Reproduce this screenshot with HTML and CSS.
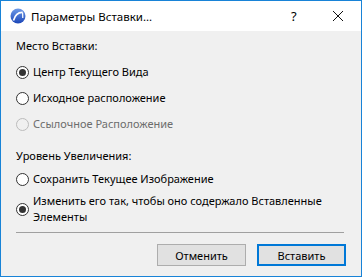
FILE: index.html
```html
<!DOCTYPE html>
<html lang="ru">
<head>
  <meta charset="UTF-8" />
  <title>Параметры Вставки...</title>
  <link rel="stylesheet" href="styles.css">
</head>
<body>
  <div class="window">
    <div class="titlebar">
      <svg class="app-icon" width="16" height="16" viewBox="0 0 16 16">
        <defs>
          <linearGradient id="g" x1="0" y1="0" x2="0" y2="1">
            <stop offset="0" stop-color="#6f9be8"/>
            <stop offset="1" stop-color="#1b46b8"/>
          </linearGradient>
        </defs>
        <circle cx="8" cy="8" r="7.5" fill="url(#g)"/>
        <path d="M3.5 12.5 C5 7 8 4.2 12.6 4.4" stroke="#fff" stroke-width="1.6" fill="none"/>
        <path d="M12.6 4.4 L12.8 10" stroke="#fff" stroke-width="1.2" fill="none"/>
      </svg>
      <span class="title">Параметры Вставки...</span>
      <span class="help">?</span>
      <svg class="close" width="12" height="12" viewBox="0 0 12 12">
        <path d="M1 1 L11 11 M11 1 L1 11" stroke="#111" stroke-width="1"/>
      </svg>
    </div>

    <div class="content">
      <div class="group-label">Место Вставки:</div>
      <label class="radio checked"><span class="dot"></span>Центр Текущего Вида</label>
      <label class="radio"><span class="dot"></span>Исходное расположение</label>
      <label class="radio disabled"><span class="dot"></span>Ссылочное Расположение</label>

      <div class="group-label second">Уровень Увеличения:</div>
      <label class="radio keep"><span class="dot"></span>Сохранить Текущее Изображение</label>
      <label class="radio checked multi"><span class="dot"></span><span>Изменить его так, чтобы оно содержало Вставленные Элементы</span></label>

      <div class="separator"></div>

      <div class="buttons">
        <button class="btn">Отменить</button>
        <button class="btn default">Вставить</button>
      </div>
    </div>
  </div>
</body>
</html>
```

FILE: styles.css
```css
html, body {
  margin: 0;
  padding: 0;
}
body {
  font-family: 'Noto Sans', 'Open Sans', sans-serif;
  font-size: 11px;
  color: #000;
  background: #fff;
}
.window {
  width: 362px;
  height: 277px;
  box-sizing: border-box;
  border: 1px solid #1883d7;
  background: #f0f0f0;
  display: flex;
  flex-direction: column;
}
.titlebar {
  height: 30px;
  background: #fff;
  display: flex;
  align-items: center;
  padding-left: 9px;
}
.app-icon {
  margin-right: 5px;
}
.title {
  flex: 1;
  font-size: 11.5px;
}
.help {
  width: 10px;
  font-size: 13px;
  margin-right: 31px;
}
.close {
  margin-right: 17px;
}
.content {
  padding: 7px 15px 0 15px;
}
.group-label {
  line-height: 16px;
  margin-bottom: 10px;
}
.group-label.second {
  margin-top: 16px;
  margin-bottom: 7px;
}
.radio {
  display: flex;
  align-items: center;
  line-height: 16px;
  margin-bottom: 10px;
}
.radio.keep {
  margin-bottom: 6px;
}
.radio .dot {
  width: 11px;
  height: 11px;
  border: 1px solid #333;
  border-radius: 50%;
  background: #fff;
  margin-right: 4px;
  position: relative;
  flex: none;
}
.radio.checked .dot::after {
  content: '';
  position: absolute;
  left: 2px;
  top: 2px;
  width: 7px;
  height: 7px;
  border-radius: 50%;
  background: #333;
}
.radio.disabled {
  color: #6d6d6d;
}
.radio.disabled .dot {
  border-color: #bcbcbc;
  background: #f0f0f0;
}
.radio.multi {
  margin-bottom: 7px;
}
.separator {
  height: 1px;
  background: #a0a0a0;
  margin-right: 2px;
}
.buttons {
  display: flex;
  justify-content: flex-end;
  gap: 11px;
  margin-top: 11px;
}
.btn {
  width: 89px;
  height: 22px;
  font-family: inherit;
  font-size: 11px;
  background: #e1e1e1;
  border: 1px solid #adadad;
  border-radius: 0;
  padding: 0;
  color: #000;
}
.btn.default {
  border: 2px solid #0078d7;
}
```
